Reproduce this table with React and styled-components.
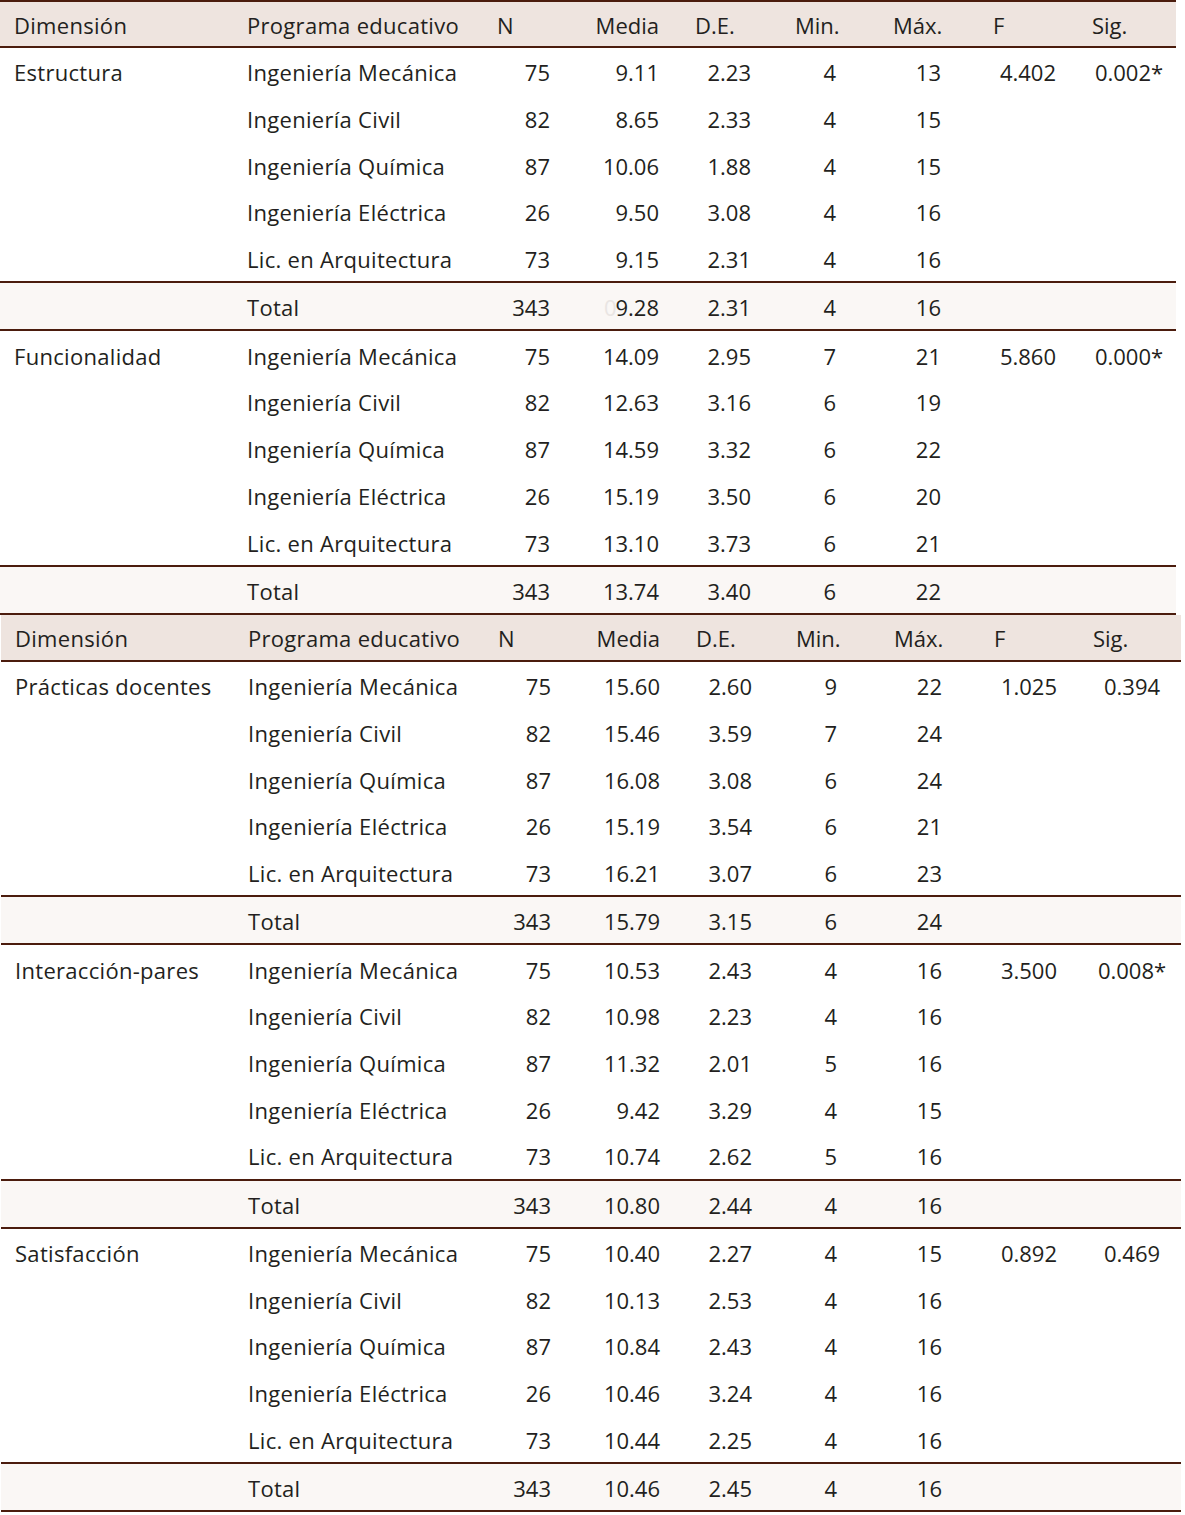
import React from "react";
import styled, { createGlobalStyle, css } from "styled-components";

const Global = createGlobalStyle`
  html, body { margin: 0; padding: 0; background: #ffffff; }
  body {
    font-family: "Open Sans", "Noto Sans", "Liberation Sans", sans-serif;
    color: #231f20;
  }
`;

const LINE = "#4b1c0d";

const Page = styled.div`
  width: 1185px;
  display: flex;
  flex-direction: column;
`;

const Table = styled.div`
  display: flex;
  flex-direction: column;
  width: ${(p) => p.$width}px;
  margin-left: ${(p) => p.$offset}px;
  border-top: ${(p) => (p.$topLine ? `2px solid ${LINE}` : "none")};
`;

const Row = styled.div`
  display: grid;
  grid-template-columns: 240px 250px 70px 110px 95px 85px 105px 115px 1fr;
  font-size: 22px;
  ${(p) =>
    p.$kind === "header" &&
    css`
      height: ${p.$tall ? 45 : 44}px;
      background: #eee4df;
      border-bottom: 2px solid ${LINE};
    `}
  ${(p) =>
    p.$kind === "data" &&
    css`
      height: 46.7px;
      background: #ffffff;
    `}
  ${(p) =>
    p.$kind === "total" &&
    css`
      height: 46px;
      background: #faf7f5;
      border-top: 2px solid ${LINE};
      border-bottom: 2px solid ${LINE};
    `}
`;

const Cell = styled.div`
  display: flex;
  align-items: center;
  padding-top: 2px;
  box-sizing: border-box;
  white-space: nowrap;
  justify-content: ${(p) =>
    p.$align === "right" ? "flex-end" : p.$align === "center" ? "center" : "flex-start"};
  padding-left: ${(p) => p.$pl || 0}px;
  padding-right: ${(p) => p.$pr || 0}px;
  letter-spacing: ${(p) => (p.$text ? "0.3px" : "0")};
`;

const Ghost = styled.span`
  color: #e9e5e3;
  margin-right: -1px;
`;

const COLS = [
  { head: { align: "left", pl: 14 }, val: { align: "left", pl: 14 }, text: true },
  { head: { align: "left", pl: 7 }, val: { align: "left", pl: 7 }, text: true },
  { head: { align: "left", pl: 7 }, val: { align: "right", pr: 10 } },
  { head: { align: "right", pr: 11 }, val: { align: "right", pr: 11 } },
  { head: { align: "left", pl: 25 }, val: { align: "right", pr: 14 } },
  { head: { align: "left", pl: 30 }, val: { align: "right", pr: 14 } },
  { head: { align: "left", pl: 43 }, val: { align: "right", pr: 14 } },
  { head: { align: "left", pl: 38 }, val: { align: "right", pr: 14 } },
  { head: { align: "left", pl: 22 }, val: { align: "center", pl: 12 } },
];

const HEAD = ["Dimensión", "Programa educativo", "N", "Media", "D.E.", "Min.", "Máx.", "F", "Sig."];

const PROGS = [
  "Ingeniería Mecánica",
  "Ingeniería Civil",
  "Ingeniería Química",
  "Ingeniería Eléctrica",
  "Lic. en Arquitectura",
];
const NS = ["75", "82", "87", "26", "73"];

const GROUPS1 = [
  {
    name: "Estructura",
    F: "4.402",
    sig: "0.002*",
    rows: [
      ["9.11", "2.23", "4", "13"],
      ["8.65", "2.33", "4", "15"],
      ["10.06", "1.88", "4", "15"],
      ["9.50", "3.08", "4", "16"],
      ["9.15", "2.31", "4", "16"],
    ],
    total: [<><Ghost>0</Ghost>9.28</>, "2.31", "4", "16"],
  },
  {
    name: "Funcionalidad",
    F: "5.860",
    sig: "0.000*",
    rows: [
      ["14.09", "2.95", "7", "21"],
      ["12.63", "3.16", "6", "19"],
      ["14.59", "3.32", "6", "22"],
      ["15.19", "3.50", "6", "20"],
      ["13.10", "3.73", "6", "21"],
    ],
    total: ["13.74", "3.40", "6", "22"],
  },
];

const GROUPS2 = [
  {
    name: "Prácticas docentes",
    F: "1.025",
    sig: "0.394",
    rows: [
      ["15.60", "2.60", "9", "22"],
      ["15.46", "3.59", "7", "24"],
      ["16.08", "3.08", "6", "24"],
      ["15.19", "3.54", "6", "21"],
      ["16.21", "3.07", "6", "23"],
    ],
    total: ["15.79", "3.15", "6", "24"],
  },
  {
    name: "Interacción-pares",
    F: "3.500",
    sig: "0.008*",
    rows: [
      ["10.53", "2.43", "4", "16"],
      ["10.98", "2.23", "4", "16"],
      ["11.32", "2.01", "5", "16"],
      ["9.42", "3.29", "4", "15"],
      ["10.74", "2.62", "5", "16"],
    ],
    total: ["10.80", "2.44", "4", "16"],
  },
  {
    name: "Satisfacción",
    F: "0.892",
    sig: "0.469",
    rows: [
      ["10.40", "2.27", "4", "15"],
      ["10.13", "2.53", "4", "16"],
      ["10.84", "2.43", "4", "16"],
      ["10.46", "3.24", "4", "16"],
      ["10.44", "2.25", "4", "16"],
    ],
    total: ["10.46", "2.45", "4", "16"],
  },
];

function HeaderRow({ tall }) {
  return (
    <Row $kind="header" $tall={tall}>
      {HEAD.map((h, i) => (
        <Cell
          key={i}
          $text={COLS[i].text}
          $align={COLS[i].head.align}
          $pl={COLS[i].head.pl}
          $pr={COLS[i].head.pr}
        >
          {h}
        </Cell>
      ))}
    </Row>
  );
}

function ValueRow({ kind, values }) {
  return (
    <Row $kind={kind}>
      {values.map((v, i) => (
        <Cell
          key={i}
          $text={COLS[i].text}
          $align={COLS[i].val.align}
          $pl={COLS[i].val.pl}
          $pr={COLS[i].val.pr}
        >
          {v}
        </Cell>
      ))}
    </Row>
  );
}

function Group({ g }) {
  return (
    <>
      {g.rows.map((r, i) => (
        <ValueRow
          key={i}
          kind="data"
          values={[
            i === 0 ? g.name : "",
            PROGS[i],
            NS[i],
            ...r,
            i === 0 ? g.F : "",
            i === 0 ? g.sig : "",
          ]}
        />
      ))}
      <ValueRow kind="total" values={["", "Total", "343", ...g.total, "", ""]} />
    </>
  );
}

export default function App() {
  return (
    <Page>
      <Global />
      <Table $width={1176} $offset={0} $topLine>
        <HeaderRow />
        {GROUPS1.map((g) => (
          <Group key={g.name} g={g} />
        ))}
      </Table>
      <Table $width={1180} $offset={1}>
        <HeaderRow tall />
        {GROUPS2.map((g) => (
          <Group key={g.name} g={g} />
        ))}
      </Table>
    </Page>
  );
}
